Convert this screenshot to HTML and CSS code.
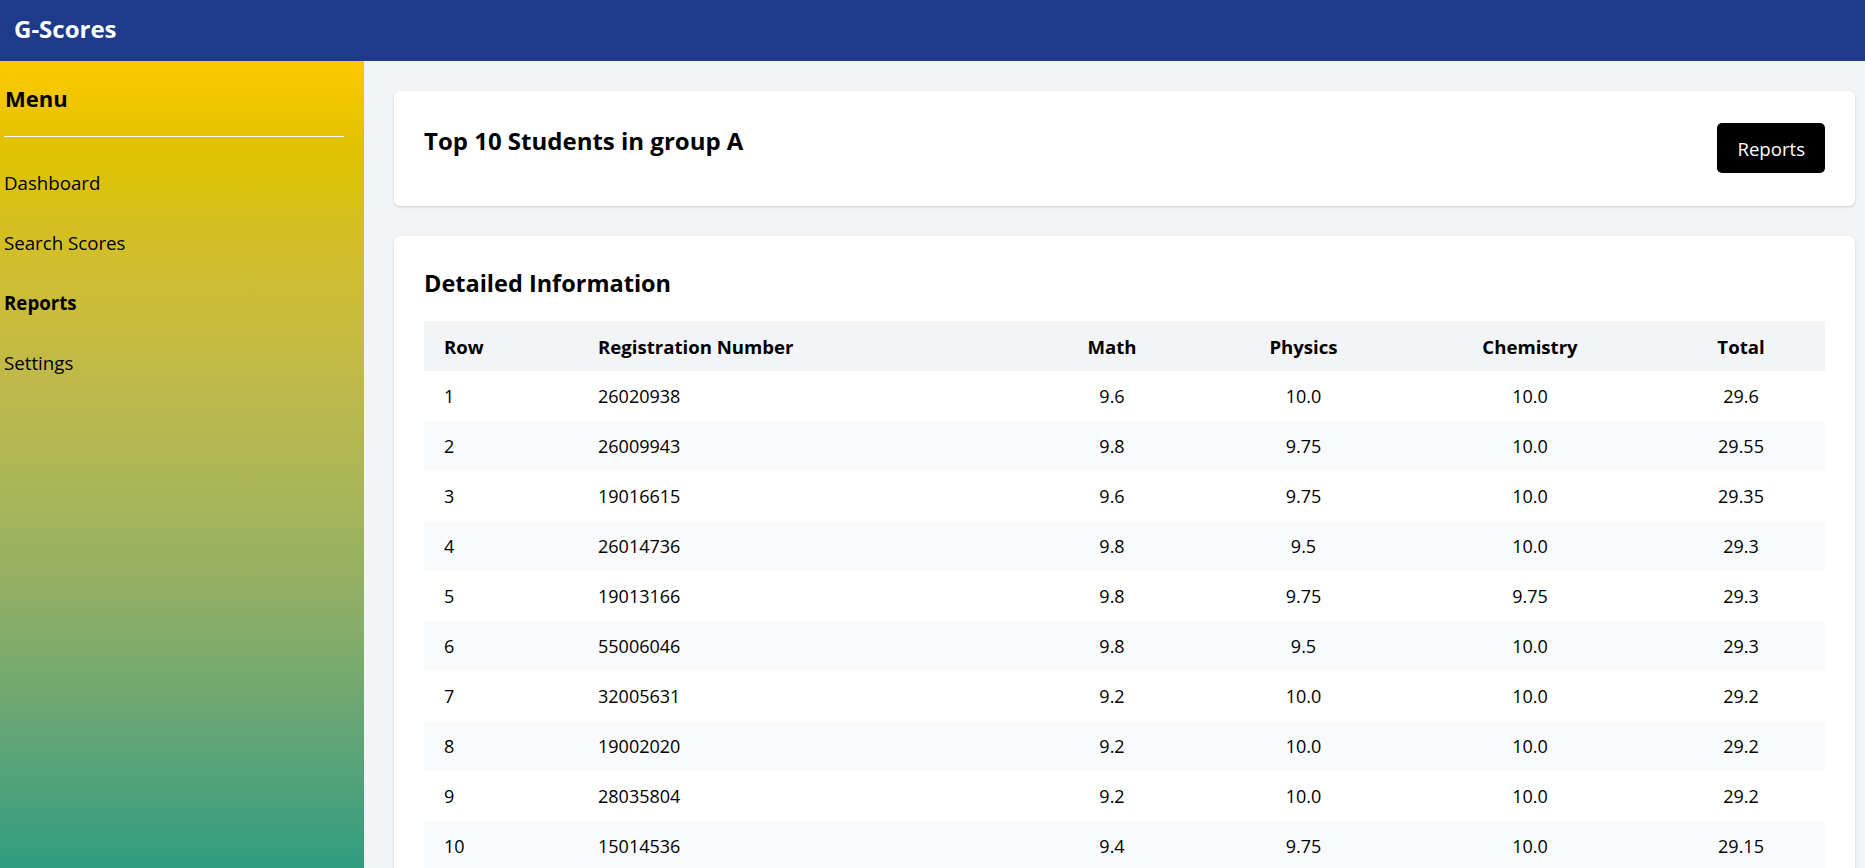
FILE: index.html
```html
<!DOCTYPE html>
<html lang="en">
<head>
<meta charset="utf-8">
<title>G-Scores</title>
<link rel="stylesheet" href="styles.css">
</head>
<body>
<header class="topbar">
  <div class="brand">G-Scores</div>
</header>
<div class="layout">
  <aside class="sidebar">
    <h2 class="menu-title">Menu</h2>
    <hr class="menu-rule">
    <nav class="menu">
      <a class="menu-item">Dashboard</a>
      <a class="menu-item">Search Scores</a>
      <a class="menu-item active">Reports</a>
      <a class="menu-item">Settings</a>
    </nav>
  </aside>
  <main class="main">
    <section class="card card-top">
      <h1 class="page-title">Top 10 Students in group A</h1>
      <button class="btn">Reports</button>
    </section>
    <section class="card card-table">
      <h2 class="section-title">Detailed Information</h2>
      <table class="scores">
        <colgroup>
          <col class="c-row"><col class="c-reg"><col class="c-math"><col class="c-phy"><col class="c-chem"><col class="c-total">
        </colgroup>
        <thead>
          <tr><th class="left">Row</th><th class="left">Registration Number</th><th>Math</th><th>Physics</th><th>Chemistry</th><th>Total</th></tr>
        </thead>
        <tbody>
          <tr><td class="left">1</td><td class="left">26020938</td><td>9.6</td><td>10.0</td><td>10.0</td><td>29.6</td></tr>
          <tr><td class="left">2</td><td class="left">26009943</td><td>9.8</td><td>9.75</td><td>10.0</td><td>29.55</td></tr>
          <tr><td class="left">3</td><td class="left">19016615</td><td>9.6</td><td>9.75</td><td>10.0</td><td>29.35</td></tr>
          <tr><td class="left">4</td><td class="left">26014736</td><td>9.8</td><td>9.5</td><td>10.0</td><td>29.3</td></tr>
          <tr><td class="left">5</td><td class="left">19013166</td><td>9.8</td><td>9.75</td><td>9.75</td><td>29.3</td></tr>
          <tr><td class="left">6</td><td class="left">55006046</td><td>9.8</td><td>9.5</td><td>10.0</td><td>29.3</td></tr>
          <tr><td class="left">7</td><td class="left">32005631</td><td>9.2</td><td>10.0</td><td>10.0</td><td>29.2</td></tr>
          <tr><td class="left">8</td><td class="left">19002020</td><td>9.2</td><td>10.0</td><td>10.0</td><td>29.2</td></tr>
          <tr><td class="left">9</td><td class="left">28035804</td><td>9.2</td><td>10.0</td><td>10.0</td><td>29.2</td></tr>
          <tr><td class="left">10</td><td class="left">15014536</td><td>9.4</td><td>9.75</td><td>10.0</td><td>29.15</td></tr>
        </tbody>
      </table>
    </section>
  </main>
</div>
</body>
</html>
```
FILE: styles.css
```css
* { box-sizing: border-box; }
html, body { margin: 0; padding: 0; height: 100%; overflow: hidden; }
body {
  font-family: "Open Sans", "Noto Sans", sans-serif;
  color: #000;
  background: #f3f4f6;
}
.topbar {
  height: 61px;
  background: #1e3a8a;
  display: flex;
  align-items: center;
  padding: 0 0 4px 14px;
}
.brand {
  color: #fff;
  font-weight: 700;
  font-size: 24px;
  line-height: 30px;
}
.layout {
  display: flex;
  height: calc(100vh - 61px);
}
.sidebar {
  width: 364px;
  flex: 0 0 364px;
  background: linear-gradient(to bottom,
    #fdc900 0%,
    #e0c200 11%,
    #d0be2e 25%,
    #bfb94b 40%,
    #a6b55a 55%,
    #87ad68 70%,
    #5ea477 85%,
    #2f9c80 100%);
  padding: 21px 20px 0 4px;
}
.menu-title {
  margin: 0;
  font-size: 22px;
  line-height: 33px;
  font-weight: 700;
  padding-left: 1px;
}
.menu-rule {
  margin: 21px 0 0 0;
  border: 0;
  border-top: 1px solid #fff;
  height: 0;
}
.menu {
  display: flex;
  flex-direction: column;
  margin-top: 16px;
}
.menu-item {
  display: block;
  font-size: 18.7px;
  line-height: 28px;
  padding: 16px 0;
  color: #000;
}
.menu-item.active { font-weight: 700; }
.main {
  flex: 1;
  padding: 30px 10px 0 30px;
  overflow: hidden;
}
.card {
  background: #fff;
  border-radius: 6px;
  box-shadow: 0 1px 3px rgba(0,0,0,0.12), 0 1px 2px rgba(0,0,0,0.06);
}
.card-top {
  display: flex;
  justify-content: space-between;
  align-items: flex-start;
  padding: 32px 30px 33px 30px;
}
.page-title {
  margin: 2px 0 0 0;
  font-size: 24px;
  line-height: 31px;
  font-weight: 700;
}
.btn {
  height: 50px;
  padding: 0 20px;
  background: #000;
  color: #fff;
  border: 0;
  border-radius: 5px;
  font-family: inherit;
  font-size: 18.6px;
}
.card-table {
  margin-top: 30px;
  padding: 34px 30px 30px 30px;
}
.section-title {
  margin: 0 0 25px 0;
  font-size: 23.5px;
  line-height: 26px;
  font-weight: 700;
}
.scores {
  width: 100%;
  border-collapse: collapse;
  table-layout: fixed;
  font-size: 18px;
}
.c-row { width: 154px; }
.c-reg { width: 442px; }
.c-math { width: 184px; }
.c-phy { width: 199px; }
.c-chem { width: 254px; }
.c-total { width: 168px; }
.scores th, .scores td {
  height: 50px;
  padding: 0 20px;
  text-align: center;
  white-space: nowrap;
}
.scores th { background: #f3f4f6; font-weight: 700; font-size: 18.6px; }
.scores .left { text-align: left; }
.scores tbody tr:nth-child(even) { background: #f9fafb; }
```
